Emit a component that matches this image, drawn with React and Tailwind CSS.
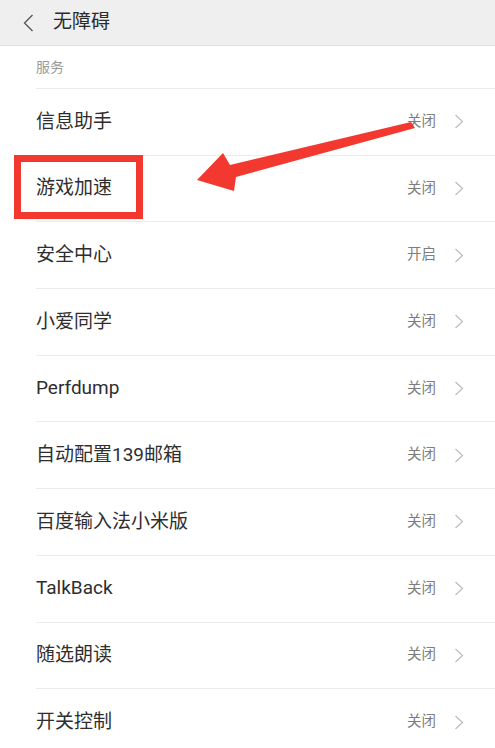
const rows = [
  { name: "信息助手", state: "关闭" },
  { name: "游戏加速", state: "关闭" },
  { name: "安全中心", state: "开启" },
  { name: "小爱同学", state: "关闭" },
  { name: "Perfdump", state: "关闭" },
  { name: "自动配置139邮箱", state: "关闭" },
  { name: "百度输入法小米版", state: "关闭" },
  { name: "TalkBack", state: "关闭" },
  { name: "随选朗读", state: "关闭" },
  { name: "开关控制", state: "关闭" },
];

const Chevron = () => (
  <svg width="10" height="15" viewBox="0 0 10 15" fill="none">
    <path d="M1.5 1 L8.5 7.5 L1.5 14" stroke="#bcbcbc" strokeWidth="1.2" />
  </svg>
);

const Row = ({ name, state }) => (
  <li className="ml-[36px] h-[66.7px] border-t border-[#ebebeb] flex items-center justify-between pr-[31px]">
    <span className="text-[19px] text-[#2e2e2e]">{name}</span>
    <div className="flex items-center gap-[18px]">
      <span className="text-[14.5px] text-[#7d7d7d]">{state}</span>
      <Chevron />
    </div>
  </li>
);

export default function App() {
  return (
    <div
      className="relative w-[495px] h-[748px] overflow-hidden bg-white"
      style={{ fontFamily: 'Roboto, "Noto Sans CJK SC", sans-serif' }}
    >
      <header className="h-[46px] bg-[#efefef] border-b border-[#dedede] flex items-center pl-[23px]">
        <svg width="11" height="18" viewBox="0 0 11 18" fill="none">
          <path d="M9.5 1 L1.5 9 L9.5 17" stroke="#555" strokeWidth="1.3" />
        </svg>
        <h1 className="ml-[19px] text-[19px] text-[#2b2b2b] -mt-[1px]">无障碍</h1>
      </header>

      <div className="h-[42px] flex items-center pl-[36px] text-[14px] text-[#9a9a9a]">服务</div>

      <ul>
        {rows.map((r) => (
          <Row key={r.name} {...r} />
        ))}
      </ul>

      {/* annotation: red box + arrow */}
      <div className="absolute left-[14px] top-[155px] w-[129px] h-[64px] border-[7px] border-[#f2382f]" />
      <svg className="absolute left-0 top-0" width="495" height="748" viewBox="0 0 495 748">
        <polygon
          points="197,180 223,153 230,165 411,122 415,128 236,177 234,191"
          fill="#f2382f"
        />
      </svg>
    </div>
  );
}
